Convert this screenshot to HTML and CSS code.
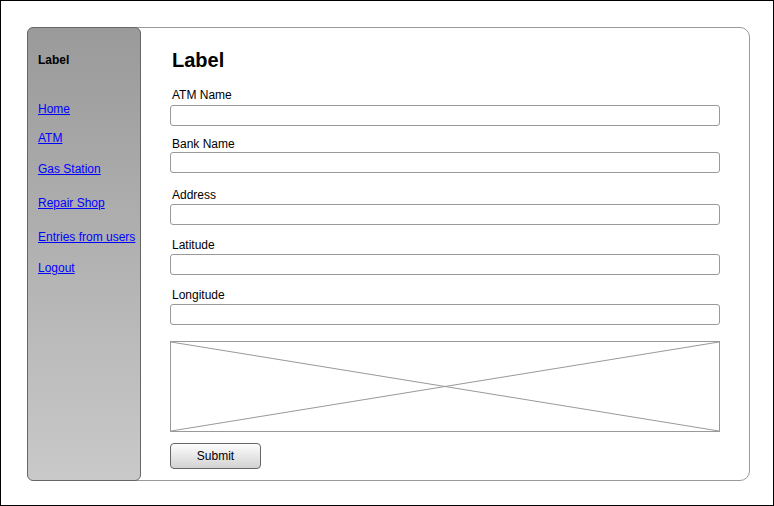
FILE: index.html
```html
<!DOCTYPE html>
<html>
<head>
<meta charset="utf-8">
<link rel="stylesheet" href="styles.css">
</head>
<body>
<div class="frame">
  <div class="sidebar">
    <div class="side-label">Label</div>
    <a class="nav nav-home" href="#">Home</a>
    <a class="nav nav-atm" href="#">ATM</a>
    <a class="nav nav-gas" href="#">Gas Station</a>
    <a class="nav nav-repair" href="#">Repair Shop</a>
    <a class="nav nav-entries" href="#">Entries from users</a>
    <a class="nav nav-logout" href="#">Logout</a>
  </div>
  <div class="main">
    <h1 class="title">Label</h1>
    <div class="field f-atm"><label class="flabel">ATM Name</label><input class="finput" type="text"></div>
    <div class="field f-bank"><label class="flabel lab-bank">Bank Name</label><input class="finput" type="text"></div>
    <div class="field f-addr"><label class="flabel lab-low">Address</label><input class="finput" type="text"></div>
    <div class="field f-lat"><label class="flabel lab-low">Latitude</label><input class="finput" type="text"></div>
    <div class="field f-lon"><label class="flabel lab-low">Longitude</label><input class="finput" type="text"></div>
    <div class="placeholder">
      <svg class="xsvg" viewBox="0 0 100 100" preserveAspectRatio="none">
        <line x1="0" y1="0" x2="100" y2="100" vector-effect="non-scaling-stroke"/>
        <line x1="0" y1="100" x2="100" y2="0" vector-effect="non-scaling-stroke"/>
      </svg>
    </div>
    <button class="submit" type="button">Submit</button>
  </div>
</div>
</body>
</html>
```
FILE: styles.css
```css
* { box-sizing: border-box; }
html, body { margin: 0; padding: 0; }
body {
  width: 774px;
  height: 506px;
  border: 1px solid #000;
  padding: 26px 0 0 26px;
  background: #fff;
  font-family: "Liberation Sans", Arial, sans-serif;
  font-size: 12px;
  color: #000;
}
.frame {
  display: flex;
  width: 723px;
  height: 454px;
  border: 1px solid #999;
  border-radius: 10px;
}
.sidebar {
  width: 114px;
  margin: -1px 0 -1px -1px;
  border: 1px solid #666;
  border-radius: 6px;
  background: linear-gradient(to bottom, #9a9a9a, #c9c9c9);
  display: flex;
  flex-direction: column;
  align-items: flex-start;
  padding: 25px 0 0 10px;
}
.side-label {
  font-weight: bold;
  line-height: 14px;
}
.nav {
  color: #0000ff;
  text-decoration: underline;
  line-height: 14px;
}
.nav-home { margin-top: 35px; }
.nav-atm { margin-top: 15px; }
.nav-gas { margin-top: 17px; }
.nav-repair { margin-top: 20px; }
.nav-entries { margin-top: 20px; }
.nav-logout { margin-top: 17px; }
.main {
  flex: 1;
  display: flex;
  flex-direction: column;
  align-items: flex-start;
  padding: 21px 0 0 29px;
}
.title {
  margin: 0 0 0 2px;
  font-size: 20px;
  line-height: 23px;
  font-weight: bold;
}
.field {
  display: flex;
  flex-direction: column;
  align-items: flex-start;
}
.f-atm { margin-top: 16px; }
.f-bank { margin-top: 11px; }
.f-addr { margin-top: 15px; }
.f-lat { margin-top: 13px; }
.f-lon { margin-top: 13px; }
.flabel {
  margin: 0 0 3px 2px;
  line-height: 14px;
}
.lab-bank { margin-bottom: 1px; }
.lab-low { margin-bottom: 2px; }
.finput {
  width: 550px;
  height: 21px;
  margin: 0;
  border: 1px solid #999;
  border-radius: 3px;
  background: #fff;
  padding: 0 4px;
  font: inherit;
}
.placeholder {
  margin-top: 16px;
  width: 550px;
  height: 91px;
  border: 1px solid #999;
}
.xsvg {
  display: block;
  width: 100%;
  height: 100%;
}
.xsvg line {
  stroke: #999;
  stroke-width: 1;
}
.submit {
  margin-top: 11px;
  width: 91px;
  height: 26px;
  border: 1px solid #666;
  border-radius: 4px;
  background: linear-gradient(to bottom, #fdfdfd, #d2d2d2);
  font-family: "Liberation Sans", Arial, sans-serif;
  font-size: 12px;
  color: #000;
  padding: 0;
}
```
